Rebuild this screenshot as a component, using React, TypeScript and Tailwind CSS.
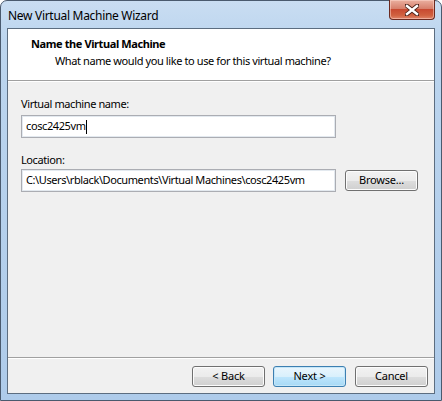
import React from "react";

const font = { fontFamily: '"Noto Sans", "Open Sans", sans-serif' };

function Btn({ label, primary }: { label: string; primary?: boolean }) {
  return (
    <div
      className={
        "w-[73px] h-[21px] rounded-[3px] border flex items-center justify-center text-[11px] tracking-[-0.2px] text-black " +
        (primary
          ? "border-[#3c7fb1] bg-[linear-gradient(to_bottom,#eaf6fd_0%,#d9f0fc_50%,#bee6fd_51%,#a7d9f5_100%)] shadow-[inset_0_0_0_1px_#c5e6f8]"
          : "border-[#707070] bg-[linear-gradient(to_bottom,#f2f2f2_0%,#ebebeb_50%,#dddddd_51%,#cfcfcf_100%)] shadow-[inset_0_0_0_1px_#fcfcfc]")
      }
    >
      {label}
    </div>
  );
}

export default function App() {
  return (
    <div
      className="w-[442px] h-[401px] rounded-t-[7px] border border-[#4a5a6e] bg-[linear-gradient(to_bottom,#c9ddf2_0%,#bcd5ee_10%,#aecbea_100%)] relative flex flex-col text-[11px] tracking-[-0.4px]"
      style={font}
    >
      {/* title bar */}
      <div className="h-[27px] flex items-center pl-[7px] pt-[2px] text-[12px] tracking-[-0.3px] text-black">
        New Virtual Machine Wizard
      </div>
      <div className="absolute top-[-1px] right-[6px] w-[46px] h-[20px] rounded-b-[4px] border border-[#6b2a20] border-t-0 bg-[linear-gradient(to_bottom,#eab0a0_0%,#d7806c_45%,#c84a31_50%,#d0603f_80%,#e0846a_100%)] shadow-[inset_0_0_0_1px_rgba(255,220,210,0.5)] flex items-center justify-center">
        <svg width="14" height="12" viewBox="0 0 14 12">
          <path
            d="M1.5 1.5 L12.5 10.5 M12.5 1.5 L1.5 10.5"
            stroke="#4a2018"
            strokeWidth="4.2"
            strokeLinecap="square"
            fill="none"
          />
          <path
            d="M2 2 L12 10 M12 2 L2 10"
            stroke="#ffffff"
            strokeWidth="2.4"
            strokeLinecap="square"
            fill="none"
          />
        </svg>
      </div>

      {/* client */}
      <div className="mx-[6px] h-[366px] border border-[#5c6d80] flex flex-col bg-[#f0f0f0]">
        {/* header */}
        <div className="h-[52px] bg-white border-b border-[#a0a0a0] pl-[23px] pt-[7px]">
          <div className="font-bold leading-[16px] text-black">Name the Virtual Machine</div>
          <div className="leading-[16px] pl-[24px] mt-[1px] text-black">
            What name would you like to use for this virtual machine?
          </div>
        </div>
        <div className="h-px bg-white" />

        {/* body */}
        <div className="flex-1 px-[13px] pt-[14px] flex flex-col">
          <div className="leading-[16px] text-black">Virtual machine name:</div>
          <div className="mt-[3px] w-[315px] h-[23px] border border-[#abadb3] bg-white flex items-center pl-[4px] text-black shadow-[inset_0_0_0_1px_#e3e9ef]">
            <span>cosc2425vm</span>
            <span className="w-px h-[14px] bg-black" />
          </div>
          <div className="mt-[14px] leading-[16px] text-black">Location:</div>
          <div className="mt-[1px] flex items-center gap-[9px]">
            <div className="w-[315px] h-[23px] border border-[#abadb3] bg-white flex items-center pl-[4px] text-black shadow-[inset_0_0_0_1px_#e3e9ef] whitespace-nowrap">
              C:\Users\rblack\Documents\Virtual Machines\cosc2425vm
            </div>
            <Btn label="Browse..." />
          </div>
        </div>

        {/* footer */}
        <div className="h-px bg-[#a0a0a0]" />
        <div className="h-px bg-white" />
        <div className="h-[34px] flex justify-end pr-[6px] pt-[7px]">
          <div className="flex">
            <Btn label="< Back" />
            <div className="ml-[8px]">
              <Btn label="Next >" primary />
            </div>
            <div className="ml-[9px]">
              <Btn label="Cancel" />
            </div>
          </div>
        </div>
      </div>
    </div>
  );
}
